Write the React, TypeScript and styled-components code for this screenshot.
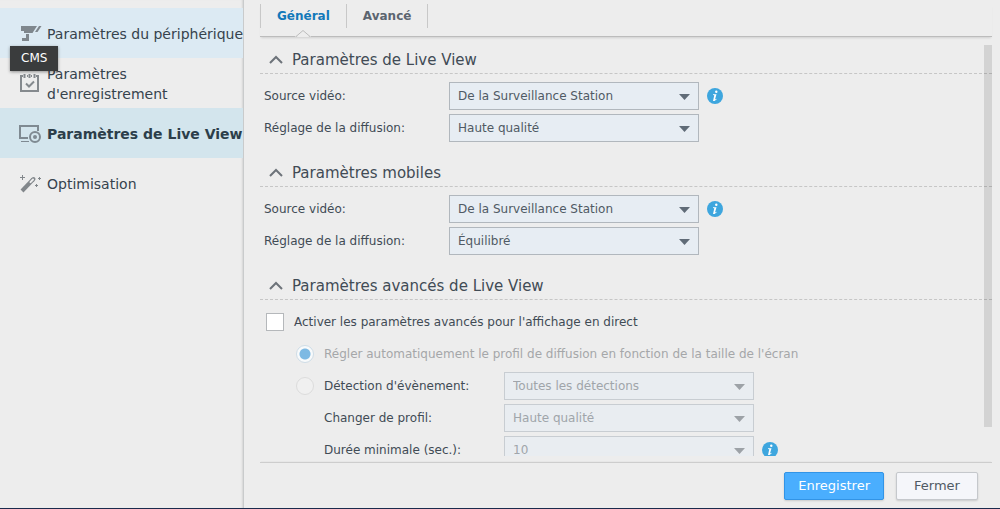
import React, { ReactNode, useId, useState } from "react";
import styled, { createGlobalStyle, css } from "styled-components";

const GlobalStyle = createGlobalStyle`
  *, *::before, *::after { box-sizing: border-box; }
  body {
    margin: 0;
    background: #ededed;
    color: #414b55;
    font-family: Verdana, "DejaVu Sans", sans-serif;
    font-size: 13px;
    line-height: 20px;
  }
  button, select, input { font: inherit; }
`;

const Window = styled.div`
  display: flex;
  height: 100vh;
  overflow: hidden;
  border-bottom: 1px solid #1b2b4d;
`;

const Sidebar = styled.nav`
  position: relative;
  flex: 0 0 244px;
  min-width: 0;
  padding-top: 8px;
  border-right: 1px solid #c9cbcc;
  box-shadow: inset -2px 0 2px -1px rgba(0, 0, 0, 0.1);
`;

const NavItem = styled.a<{ $state?: "hover" | "active"; $oneLine?: boolean }>`
  display: flex;
  align-items: center;
  gap: 5px;
  height: 50px;
  padding: 2px 0 0 18px;
  color: #36434d;
  font-size: 14px;
  text-decoration: none;
  white-space: ${(p) => (p.$oneLine ? "nowrap" : "normal")};
  ${(p) => p.$state === "hover" && css`background: #dceaf3;`}
  ${(p) =>
    p.$state === "active" &&
    css`
      background: #d3e5ed;
      color: #2c3e4a;
      font-weight: bold;
    `}
  svg { flex: none; }
`;

const Tooltip = styled.div`
  position: absolute;
  top: 46px;
  left: 10px;
  padding: 2px 11px 3px;
  background: #3a3c3d;
  color: #fff;
  font-size: 12px;
  box-shadow: 0 1px 3px rgba(0, 0, 0, 0.4);
`;

const Main = styled.main`
  display: flex;
  flex: 1;
  flex-direction: column;
  min-width: 0;
  padding: 4px 8px 8px 16px;
`;

const TabBar = styled.div`
  display: flex;
  flex: none;
  height: 33px;
  padding-bottom: 8px;
  border-bottom: 1px solid #bcbcbc;
  box-shadow: 0 2px 2px -1px rgba(0, 0, 0, 0.12);
`;

const Tab = styled.button<{ $active?: boolean }>`
  position: relative;
  padding: 0 16px;
  border: 0;
  border-right: 1px solid #c8c8c8;
  background: none;
  color: ${(p) => (p.$active ? "#1279ba" : "#5c6570")};
  font-size: 12px;
  font-weight: bold;
  &:first-child { border-left: 1px solid #c8c8c8; }
`;

const Notch = styled.svg`
  position: absolute;
  bottom: -9px;
  left: 50%;
  margin-left: -8px;
`;

const Viewport = styled.div`
  position: relative;
  flex: 1;
  min-height: 0;
  margin: 8px 0 6px;
  overflow: hidden;
`;

const ScrollThumb = styled.div`
  position: absolute;
  top: 0;
  right: 0;
  width: 8px;
  height: 93%;
  background: rgba(0, 0, 0, 0.11);
`;

const SectionBox = styled.section`
  margin-bottom: 14px;
`;

const SectionTitle = styled.h2`
  display: flex;
  align-items: center;
  gap: 8px;
  height: 29px;
  margin: 0 0 6px;
  padding: 2px 0 0 8px;
  border-bottom: 1px dashed #c6c6c6;
  color: #414b55;
  font-size: 15px;
  font-weight: normal;
`;

const Row = styled.div<{ $indent?: number }>`
  display: flex;
  align-items: center;
  height: 32px;
  padding-left: ${(p) => p.$indent ?? 4}px;
`;

const Label = styled.label<{ $width?: number; $muted?: boolean }>`
  flex: none;
  width: ${(p) => (p.$width ? `${p.$width}px` : "auto")};
  color: ${(p) => (p.$muted ? "#a5a7a9" : "#414b55")};
  font-size: 12px;
`;

const SelectBox = styled.div`
  position: relative;
  flex: none;
  width: 250px;
  svg {
    position: absolute;
    top: 12px;
    right: 9px;
    pointer-events: none;
  }
`;

const SelectInput = styled.select`
  display: block;
  width: 100%;
  height: 28px;
  padding: 0 24px 0 8px;
  appearance: none;
  border: 1px solid #b1b7bd;
  border-radius: 0;
  background: #e7edf3;
  color: #505a64;
  font-size: 12px;
  &:disabled {
    border-color: #c8cdd2;
    background: #e9edf1;
    color: #a0a5aa;
    opacity: 1;
  }
`;

const Info = styled.svg`
  flex: none;
  margin-left: 8px;
`;

const Check = styled.input`
  flex: none;
  width: 18px;
  height: 18px;
  margin: 0 10px 0 0;
  appearance: none;
  border: 1px solid #b5b8bb;
  background: #fff;
  &:checked { background: #4aaefe; }
`;

const Radio = styled.input`
  flex: none;
  width: 18px;
  height: 18px;
  margin: 0 10px 0 0;
  appearance: none;
  border: 1px solid #dcdcdc;
  border-radius: 50%;
  background: #f0f0f0;
  &:checked {
    border-color: #cfdde7;
    background: radial-gradient(circle, #7db9e3 5px, #f8fafb 6px);
  }
`;

const Footer = styled.footer`
  display: flex;
  flex: none;
  justify-content: flex-end;
  gap: 12px;
  padding: 9px 14px 0 0;
  border-top: 1px solid #cdcdcd;
  box-shadow: 0 -1px 1px -1px rgba(0, 0, 0, 0.15);
`;

const Button = styled.button<{ $primary?: boolean }>`
  height: 28px;
  min-width: 82px;
  padding: 0 13px;
  border: 1px solid ${(p) => (p.$primary ? "#3294e6" : "#c5c8cc")};
  border-radius: 2px;
  background: ${(p) => (p.$primary ? "#4aaefe" : "#f5f6fa")};
  color: ${(p) => (p.$primary ? "#fff" : "#505a64")};
  box-shadow: 0 1px 2px rgba(0, 0, 0, 0.15);
`;

function CameraIcon() {
  return (
    <svg width="24" height="24" viewBox="0 0 24 24" fill="#7f878d">
      <path d="M3 4h16l-4.500 7H6V9H3z" />
      <path d="M21 4h2.500l-4 6H17z" />
      <path d="M8 12h3v7H4v-3h4z" />
    </svg>
  );
}

function CalendarIcon() {
  return (
    <svg width="24" height="24" viewBox="0 0 24 24" fill="none" stroke="#858a8e" strokeWidth="2">
      <path d="M5 4H3v15h17V4h-2M9 4h1M13 4h1" />
      <path d="M6.500 2v4M11.500 2v4M16.500 2v4" />
      <path d="M8 11.500l3 3 5-5" />
    </svg>
  );
}

function MonitorIcon() {
  return (
    <svg width="24" height="24" viewBox="0 0 24 24" fill="none" stroke="#7f8a92" strokeWidth="2">
      <path d="M10 16H2V4h18v5" />
      <path d="M3 19.500h8" strokeWidth="1" />
      <circle cx="17" cy="15" r="5" />
      <circle cx="17" cy="15" r="2" fill="#7f8a92" stroke="none" />
    </svg>
  );
}

function WandIcon() {
  return (
    <svg width="24" height="24" viewBox="0 0 24 24" fill="none" stroke="#82878b">
      <path d="M4 19l11-11.500" strokeWidth="4" />
      <path d="M14.500 8l1-1" strokeWidth="4" strokeLinecap="round" />
      <path d="M12.500 10.100l2.500-2.600" strokeWidth="2" stroke="#ededed" strokeLinecap="round" />
      <path d="M4.500 3v5M2 5.500h5M21.500 5v3M20 6.500h3M18.500 12v3M17 13.500h3" />
    </svg>
  );
}

function Chevron() {
  return (
    <svg width="16" height="10" viewBox="0 0 16 10" fill="none" stroke="#6d737a" strokeWidth="2">
      <path d="M2 8l6-6 6 6" />
    </svg>
  );
}

function InfoIcon() {
  return (
    <Info width="16" height="16" viewBox="0 0 16 16" role="img" aria-label="Information">
      <circle cx="8" cy="8" r="8" fill="#3ea6de" />
      <circle cx="9.300" cy="3.700" r="1.200" fill="#fff" />
      <path d="M6 6.200h3.500L8 11.400l1.500-.6v.8L7.500 13H6l1.300-5.700L6 7z" fill="#fff" />
    </Info>
  );
}

interface FieldProps {
  label: string;
  value: string;
  info?: boolean;
  disabled?: boolean;
  indent?: number;
  labelWidth?: number;
  before?: ReactNode;
}

function Field({ label, value, info, disabled, indent, labelWidth = 185, before }: FieldProps) {
  const id = useId();
  return (
    <Row $indent={indent}>
      {before}
      <Label htmlFor={id} $width={labelWidth}>{label}</Label>
      <SelectBox>
        <SelectInput id={id} disabled={disabled}>
          <option>{value}</option>
        </SelectInput>
        <svg width="11" height="6" viewBox="0 0 11 6">
          <path d="M0 0h11L5.500 6z" fill={disabled ? "#9da2a7" : "#606b77"} />
        </svg>
      </SelectBox>
      {info && <InfoIcon />}
    </Row>
  );
}

function Section({ title, children }: { title: string; children: ReactNode }) {
  return (
    <SectionBox>
      <SectionTitle><Chevron />{title}</SectionTitle>
      {children}
    </SectionBox>
  );
}

export default function App() {
  const [advanced, setAdvanced] = useState(false);
  return (
    <>
      <GlobalStyle />
      <Window>
        <Sidebar>
          <NavItem href="#device" $state="hover" $oneLine><CameraIcon />Paramètres du périphérique</NavItem>
          <NavItem href="#recording"><CalendarIcon />Paramètres d'enregistrement</NavItem>
          <NavItem href="#live" $state="active" $oneLine><MonitorIcon />Paramètres de Live View</NavItem>
          <NavItem href="#optimisation"><WandIcon />Optimisation</NavItem>
          <Tooltip role="tooltip">CMS</Tooltip>
        </Sidebar>
        <Main>
          <TabBar role="tablist">
            <Tab role="tab" aria-selected $active>
              Général
              <Notch width="16" height="8" viewBox="0 0 16 8">
                <path d="M0 7.500h2l6-6 6 6h2V8H0z" fill="#ededed" />
                <path d="M1 7.500l7-6 7 6" fill="none" stroke="#bcbcbc" />
              </Notch>
            </Tab>
            <Tab role="tab" aria-selected={false}>Avancé</Tab>
          </TabBar>
          <Viewport>
            <Section title="Paramètres de Live View">
              <Field label="Source vidéo:" value="De la Surveillance Station" info />
              <Field label="Réglage de la diffusion:" value="Haute qualité" />
            </Section>
            <Section title="Paramètres mobiles">
              <Field label="Source vidéo:" value="De la Surveillance Station" info />
              <Field label="Réglage de la diffusion:" value="Équilibré" />
            </Section>
            <Section title="Paramètres avancés de Live View">
              <Row $indent={6}>
                <Check id="advanced" type="checkbox" checked={advanced} onChange={() => setAdvanced(!advanced)} />
                <Label htmlFor="advanced">Activer les paramètres avancés pour l'affichage en direct</Label>
              </Row>
              <Row $indent={36}>
                <Radio id="auto" type="radio" name="profile" defaultChecked disabled={!advanced} />
                <Label htmlFor="auto" $muted={!advanced}>
                  Régler automatiquement le profil de diffusion en fonction de la taille de l'écran
                </Label>
              </Row>
              <Field
                label="Détection d'évènement:"
                value="Toutes les détections"
                disabled={!advanced}
                indent={36}
                labelWidth={180}
                before={<Radio type="radio" name="profile" aria-label="Détection d'évènement" disabled={!advanced} />}
              />
              <Field label="Changer de profil:" value="Haute qualité" disabled={!advanced} indent={64} labelWidth={180} />
              <Field label="Durée minimale (sec.):" value="10" disabled={!advanced} indent={64} labelWidth={180} info />
            </Section>
            <ScrollThumb />
          </Viewport>
          <Footer>
            <Button $primary>Enregistrer</Button>
            <Button>Fermer</Button>
          </Footer>
        </Main>
      </Window>
    </>
  );
}
